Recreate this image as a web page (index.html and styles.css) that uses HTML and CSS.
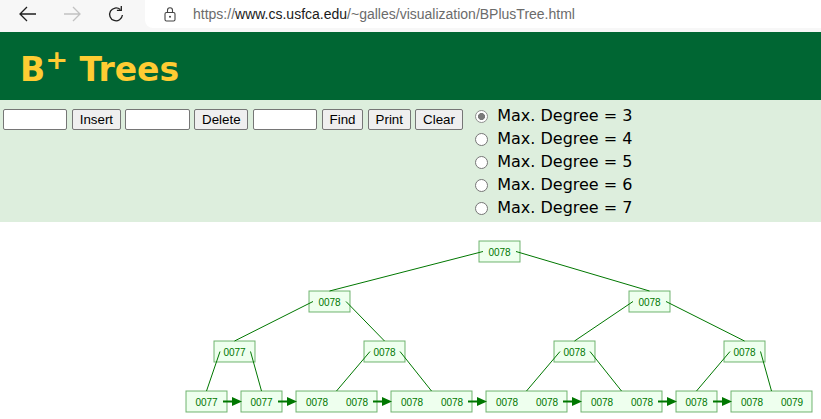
FILE: index.html
```html
<!DOCTYPE html>
<html lang="en">
<head>
<meta charset="utf-8">
<title>B+ Trees</title>
<link rel="stylesheet" href="styles.css">
</head>
<body>
<div class="chrome">
  <svg class="nav" width="145" height="28" viewBox="0 0 145 28">
    <path d="M36 14H20M27 7l-7 7 7 7" fill="none" stroke="#1f1f1f" stroke-width="1.3"/>
    <path d="M64 14h16M73 7l7 7-7 7" fill="none" stroke="#c2c2c2" stroke-width="1.3"/>
    <path d="M120.3 9.6A6.4 6.4 0 1 0 122.4 15" fill="none" stroke="#1f1f1f" stroke-width="1.3"/>
    <path d="M121.3 6v4.4h-4.4" fill="none" stroke="#1f1f1f" stroke-width="1.3"/>
  </svg>
  <div class="address">
    <svg class="lock" width="14" height="16" viewBox="0 0 14 16"><rect x="2" y="6.5" width="10" height="8.5" rx="1.5" fill="none" stroke="#444" stroke-width="1.1"/><path d="M4.5 6.5V4.2a2.5 2.5 0 0 1 5 0v2.3" fill="none" stroke="#444" stroke-width="1.1"/><circle cx="7" cy="10.7" r="1" fill="#444"/></svg>
    <span class="url"><span class="dim">https://</span>www.cs.usfca.edu<span class="dim">/~galles/visualization/BPlusTree.html</span></span>
  </div>
</div>
<header class="banner">
  <h1 class="title">B<sup class="plus">+</sup> Trees</h1>
</header>
<div class="controls">
  <div class="ops">
    <input class="field" type="text">
    <button class="btn" type="button">Insert</button>
    <input class="field" type="text">
    <button class="btn" type="button">Delete</button>
    <input class="field" type="text">
    <button class="btn" type="button">Find</button>
    <button class="btn" type="button">Print</button>
    <button class="btn" type="button">Clear</button>
  </div>
  <div class="degrees">
    <label class="degree"><input class="radio" type="radio" name="deg" checked><span>Max. Degree = 3</span></label>
    <label class="degree"><input class="radio" type="radio" name="deg"><span>Max. Degree = 4</span></label>
    <label class="degree"><input class="radio" type="radio" name="deg"><span>Max. Degree = 5</span></label>
    <label class="degree"><input class="radio" type="radio" name="deg"><span>Max. Degree = 6</span></label>
    <label class="degree"><input class="radio" type="radio" name="deg"><span>Max. Degree = 7</span></label>
  </div>
</div>
<div class="canvas">
  <svg class="tree" width="821" height="197" viewBox="0 222 821 197">
    <g class="nodes">
      <rect x="479" y="241" width="41" height="21"/>
      <rect x="309" y="291" width="41" height="21"/>
      <rect x="629" y="291" width="41" height="21"/>
      <rect x="214" y="341" width="41" height="21"/>
      <rect x="364" y="341" width="41" height="21"/>
      <rect x="554" y="341" width="41" height="21"/>
      <rect x="724" y="341" width="41" height="21"/>
      <rect x="186" y="391" width="41" height="21"/>
      <rect x="241" y="391" width="41" height="21"/>
      <rect x="296" y="391" width="81" height="21"/>
      <rect x="391" y="391" width="81" height="21"/>
      <rect x="486" y="391" width="81" height="21"/>
      <rect x="581" y="391" width="81" height="21"/>
      <rect x="676" y="391" width="41" height="21"/>
      <rect x="731" y="391" width="81" height="21"/>
    </g>
    <g class="edges">
      <line x1="483" y1="251.5" x2="329.5" y2="291"/>
      <line x1="516" y1="251.5" x2="649.5" y2="291"/>
      <line x1="313" y1="301.5" x2="234.5" y2="341"/>
      <line x1="346" y1="301.5" x2="384.5" y2="341"/>
      <line x1="633" y1="301.5" x2="574.5" y2="341"/>
      <line x1="666" y1="301.5" x2="744.5" y2="341"/>
      <line x1="220" y1="351.5" x2="206.5" y2="391"/>
      <line x1="250.5" y1="351.5" x2="261.5" y2="391"/>
      <line x1="370" y1="351.5" x2="336.5" y2="391"/>
      <line x1="400" y1="351.5" x2="431.5" y2="391"/>
      <line x1="560" y1="351.5" x2="526.5" y2="391"/>
      <line x1="590" y1="351.5" x2="621.5" y2="391"/>
      <line x1="730" y1="351.5" x2="696.5" y2="391"/>
      <line x1="760.5" y1="351.5" x2="771.5" y2="391"/>
    </g>
    <g class="links">
      <line x1="223" y1="401.5" x2="233" y2="401.5"/>
      <line x1="278" y1="401.5" x2="288" y2="401.5"/>
      <line x1="373" y1="401.5" x2="383" y2="401.5"/>
      <line x1="468" y1="401.5" x2="478" y2="401.5"/>
      <line x1="563" y1="401.5" x2="573" y2="401.5"/>
      <line x1="658" y1="401.5" x2="668" y2="401.5"/>
      <line x1="713" y1="401.5" x2="723" y2="401.5"/>
    </g>
    <g class="heads">
      <polygon points="242,401.5 232,397 232,406"/>
      <polygon points="297,401.5 287,397 287,406"/>
      <polygon points="392,401.5 382,397 382,406"/>
      <polygon points="487,401.5 477,397 477,406"/>
      <polygon points="582,401.5 572,397 572,406"/>
      <polygon points="677,401.5 667,397 667,406"/>
      <polygon points="732,401.5 722,397 722,406"/>
    </g>
    <g class="keys">
      <text x="499.5" y="252">0078</text>
      <text x="329.5" y="302">0078</text>
      <text x="649.5" y="302">0078</text>
      <text x="234.5" y="352">0077</text>
      <text x="384.5" y="352">0078</text>
      <text x="574.5" y="352">0078</text>
      <text x="744.5" y="352">0078</text>
      <text x="206.5" y="402">0077</text>
      <text x="261.5" y="402">0077</text>
      <text x="317" y="402">0078</text>
      <text x="357" y="402">0078</text>
      <text x="412" y="402">0078</text>
      <text x="452" y="402">0078</text>
      <text x="507" y="402">0078</text>
      <text x="547" y="402">0078</text>
      <text x="602" y="402">0078</text>
      <text x="642" y="402">0078</text>
      <text x="696.5" y="402">0078</text>
      <text x="752" y="402">0078</text>
      <text x="792" y="402">0079</text>
    </g>
  </svg>
</div>
</body>
</html>
```
FILE: styles.css
```css
* { box-sizing: border-box; }

body {
  margin: 0;
  width: 821px;
  height: 419px;
  overflow: hidden;
  background: #ffffff;
  font-family: "Liberation Sans", Arial, sans-serif;
}

/* browser chrome */
.chrome {
  height: 32px;
  background: #f7f7f7;
  display: flex;
  align-items: flex-start;
}
.nav { display: block; flex: none; }
.address {
  flex: 1;
  height: 28px;
  background: #ffffff;
  border-radius: 0 0 0 8px;
  display: flex;
  align-items: center;
  padding-left: 18px;
}
.lock { display: block; margin-right: 16px; margin-top: -1px; }
.url {
  font-size: 14px;
  color: #1a1a1a;
  white-space: nowrap;
}
.dim { color: #6b6b6b; }

/* banner */
.banner {
  height: 68px;
  background: #006633;
  padding: 19px 0 0 20px;
}
.title {
  margin: 0;
  font-family: "DejaVu Sans", Verdana, sans-serif;
  font-weight: bold;
  font-size: 33px;
  line-height: 38px;
  color: #ffcc33;
}
.plus {
  font-size: 0.83em;
  line-height: 0;
  vertical-align: super;
}

/* controls */
.controls {
  height: 122px;
  background: #ddeedd;
  display: flex;
  align-items: flex-start;
  gap: 12.5px;
  padding-left: 3px;
}
.ops {
  display: flex;
  align-items: flex-start;
  gap: 4.5px;
  padding-top: 9px;
}
.field {
  width: 64.4px;
  height: 21px;
  margin: 0;
  padding: 1px 2px;
  border: 1px solid #767676;
  border-radius: 2px;
  background: #ffffff;
  font-size: 13.33px;
}
.btn {
  height: 21px;
  margin: 0;
  padding: 0 6.8px;
  border: 1px solid #767676;
  border-radius: 2px;
  background: #efefef;
  color: #000;
  font-family: "Liberation Sans", Arial, sans-serif;
  font-size: 13.33px;
  line-height: 17px;
}
.degrees {
  display: flex;
  flex-direction: column;
  padding-top: 4px;
}
.degree {
  display: flex;
  align-items: center;
  height: 23px;
  font-family: "DejaVu Sans", Verdana, sans-serif;
  font-size: 16px;
  color: #000;
}
.radio {
  appearance: none;
  -webkit-appearance: none;
  flex: none;
  width: 13px;
  height: 13px;
  margin: 1px 9px 0 0;
  border: 1px solid #767676;
  border-radius: 50%;
  background: #ffffff;
}
.radio:checked {
  border-color: #8f8f8f;
  background: radial-gradient(circle, #7a7a7a 0 3.2px, #ffffff 3.8px);
}

/* tree canvas */
.canvas {
  height: 197px;
  background: #ffffff;
}
.tree { display: block; }
.edges line {
  stroke: #007700;
  stroke-width: 1;
}
.nodes rect {
  fill: #eeffee;
  stroke: #007700;
  stroke-opacity: 0.55;
  stroke-width: 1;
}
.links line {
  stroke: #007700;
  stroke-width: 2;
}
.heads polygon { fill: #007700; }
.keys text {
  font-family: "Liberation Sans", Arial, sans-serif;
  font-size: 10px;
  fill: #007700;
  text-anchor: middle;
  dominant-baseline: central;
}
```
